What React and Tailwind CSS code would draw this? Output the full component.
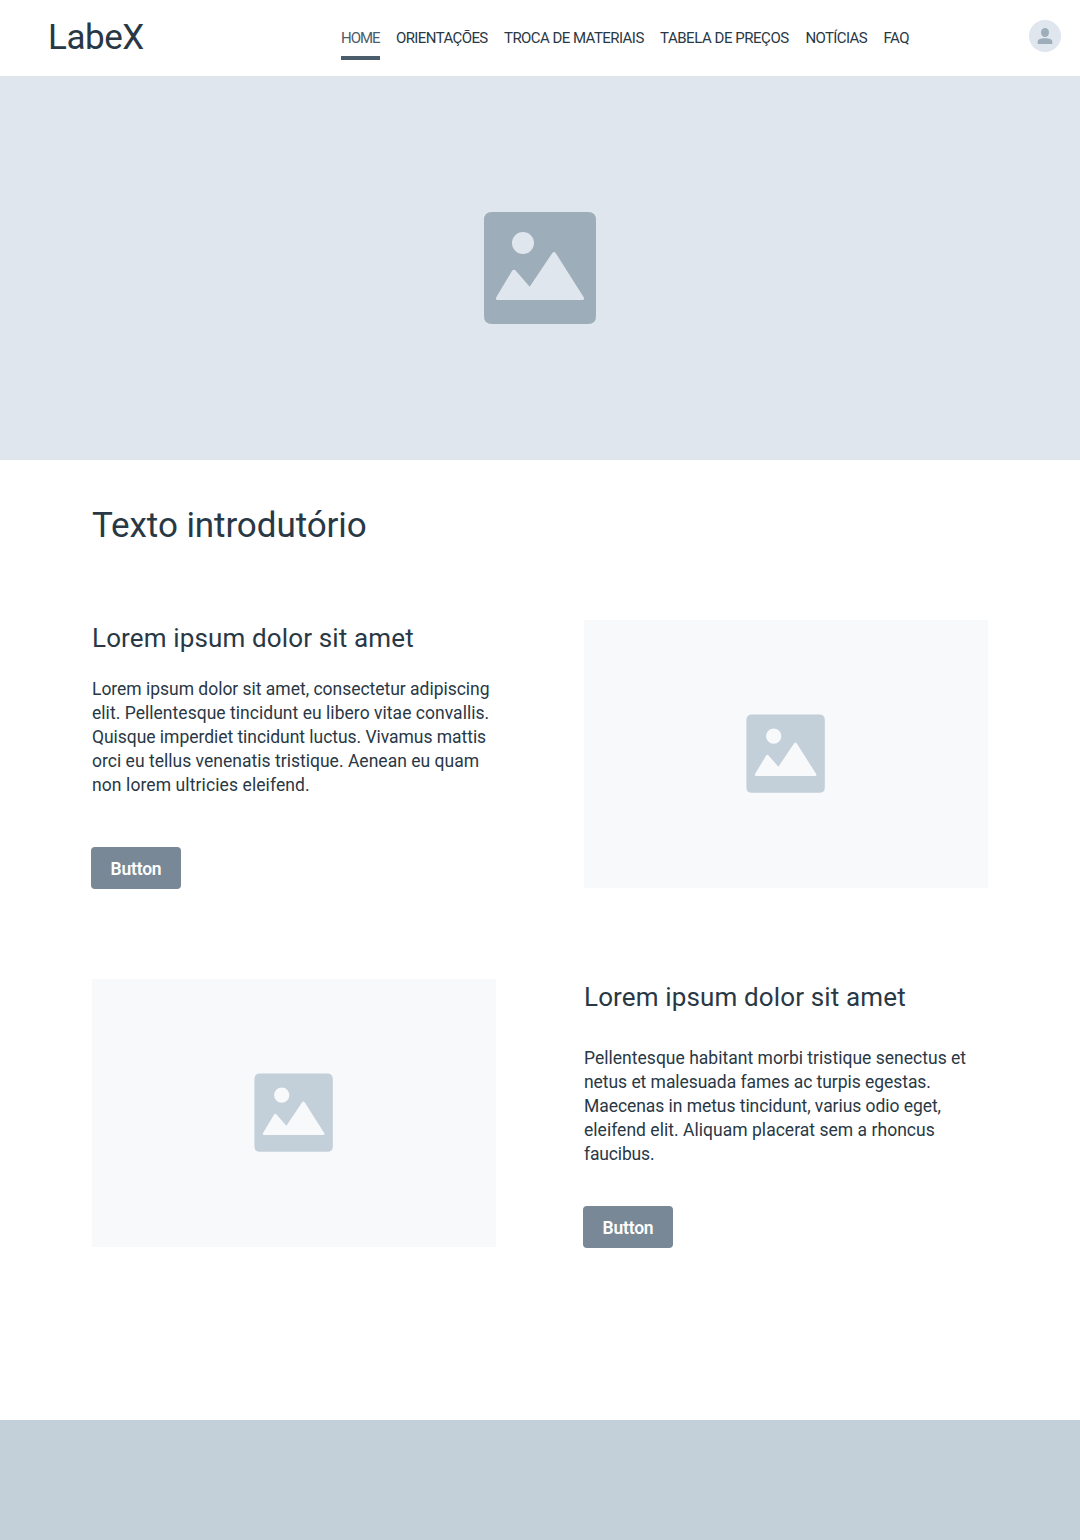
const NAV = [
  { label: "HOME", className: "w-[39px] text-[#4b5c6b] border-[#4b5c6b] tracking-[-1px]" },
  { label: "ORIENTAÇÕES", className: "w-[92px] border-transparent tracking-[-0.6px]" },
  { label: "TROCA DE MATERIAIS", className: "w-[140px] border-transparent tracking-[-0.55px]" },
  { label: "TABELA DE PREÇOS", className: "w-[129.5px] border-transparent tracking-[-0.46px]" },
  { label: "NOTÍCIAS", className: "w-[62px] border-transparent tracking-[-0.64px]" },
  { label: "FAQ", className: "w-[26px] border-transparent tracking-[-0.5px]" },
];

const FIRST = [
  { text: "Lorem ipsum dolor sit amet, consectetur adipiscing", className: "tracking-[-0.02px]" },
  { text: "elit. Pellentesque tincidunt eu libero vitae convallis.", className: "tracking-[0.035px]" },
  { text: "Quisque imperdiet tincidunt luctus. Vivamus mattis", className: "tracking-[-0.04px]" },
  { text: "orci eu tellus venenatis tristique. Aenean eu quam", className: "tracking-[0.02px]" },
  { text: "non lorem ultricies eleifend.", className: "tracking-[0.1px]" },
];

const SECOND = [
  { text: "Pellentesque habitant morbi tristique senectus et", className: "tracking-[0.02px]" },
  { text: "netus et malesuada fames ac turpis egestas.", className: "tracking-[-0.05px]" },
  { text: "Maecenas in metus tincidunt, varius odio eget,", className: "tracking-[-0.055px]" },
  { text: "eleifend elit. Aliquam placerat sem a rhoncus", className: "tracking-[0.03px]" },
  { text: "faucibus.", className: "tracking-[-0.15px]" },
];

function ImageIcon({ className, viewBox = "0 0 112 112" }) {
  return (
    <svg viewBox={viewBox} className={className} aria-hidden="true">
      <path
        fill="currentColor"
        fillRule="evenodd"
        d="M8 0H104Q112 0 112 8V104Q112 112 104 112H8Q0 112 0 104V8Q0 0 8 0ZM39 20A11 11 0 1 0 39 42A11 11 0 1 0 39 20ZM12.3 85.2L28.1 58.8Q29.7 56.8 31.6 58.6L45.7 74.7L68.2 41.2Q70 38.8 71.8 41.2L99.7 85.2Q101 88 98.2 88H13.8Q11 88 12.3 85.2Z"
      />
    </svg>
  );
}

function Lines({ lines, className }) {
  return (
    <p className={`text-[17.5px] leading-6 ${className}`}>
      {lines.map((line) => (
        <span key={line.text} className={`block whitespace-nowrap ${line.className}`}>
          {line.text}
        </span>
      ))}
    </p>
  );
}

function Title() {
  return (
    <h2 className="h-9 whitespace-nowrap text-[26px] leading-9 tracking-[0.14px]">
      Lorem ipsum dolor sit amet
    </h2>
  );
}

function Button() {
  return (
    <button className="-ml-px flex h-[42px] w-[90px] items-center justify-center rounded bg-[#788896] pt-0.5 text-[17.5px] font-semibold tracking-[-0.2px] text-white">
      Button
    </button>
  );
}

function Picture() {
  return (
    <div className="flex h-[268px] w-[404px] items-center justify-center bg-[#f8f9fb] text-[#c3cfd9]">
      <ImageIcon className="size-20" viewBox="-0.6 -0.6 114.3 114.3" />
    </div>
  );
}

export default function App() {
  return (
    <div className="flex h-[1540px] w-[1080px] flex-col overflow-hidden bg-white font-[Roboto,sans-serif] text-[#293845]">
      <header className="flex h-[76px] shrink-0 items-start">
        <div className="w-[341px] shrink-0 pt-3.5 pl-12 text-[35px] leading-[48px] tracking-[-0.45px]">LabeX</div>
        <nav className="flex h-[60px] gap-4 text-[15px] leading-6">
          {NAV.map((item) => (
            <a key={item.label} className={`h-[60px] border-b-4 pt-[26px] whitespace-nowrap ${item.className}`}>
              {item.label}
            </a>
          ))}
        </nav>
        <div className="mt-5 mr-[19px] ml-auto flex size-8 items-center justify-center rounded-full bg-[#dfe6ed] text-[#9eadba]">
          <svg viewBox="0 0 32 32" className="size-8" fill="currentColor" aria-hidden="true">
            <ellipse cx="16" cy="12.5" rx="4" ry="4.5" />
            <path d="M8.7 24V21.5C8.7 19.3 12 18.2 16 18.2S23.3 19.3 23.3 21.5V24Z" />
          </svg>
        </div>
      </header>
      <section className="flex h-96 shrink-0 items-center justify-center bg-[#dfe6ed] text-[#9eadba]">
        <ImageIcon className="size-28" />
      </section>
      <main className="flex h-[960px] shrink-0 flex-col px-[92px] pt-[42px]">
        <h1 className="h-12 text-[35px] leading-[48px] tracking-[-0.08px] whitespace-nowrap">Texto introdutório</h1>
        <section className="mt-[70px] flex h-[269px] justify-between">
          <div className="w-[404px]">
            <Title />
            <Lines lines={FIRST} className="mt-[21px] h-[120px]" />
            <div className="mt-[50px]">
              <Button />
            </div>
          </div>
          <Picture />
        </section>
        <section className="mt-[90px] flex justify-between">
          <Picture />
          <div className="w-[404px]">
            <Title />
            <Lines lines={SECOND} className="mt-[31px] h-[120px]" />
            <div className="mt-10">
              <Button />
            </div>
          </div>
        </section>
      </main>
      <footer className="h-[120px] shrink-0 bg-[#c3cfd9]" />
    </div>
  );
}
